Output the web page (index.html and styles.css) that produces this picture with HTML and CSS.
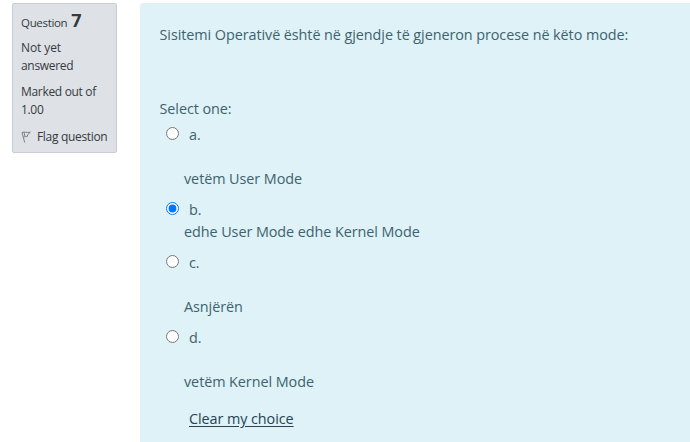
FILE: index.html
```html
<!DOCTYPE html>
<html lang="sq">
<head>
<meta charset="utf-8">
<title>Question 7</title>
<link rel="stylesheet" href="styles.css">
</head>
<body>
<main class="question">
  <aside class="info">
    <h3 class="number"><span>Question</span> <strong>7</strong></h3>
    <p class="state"><span class="wide">Not yet</span><br>answered</p>
    <p class="grade">Marked out of<br>1.00</p>
    <div class="flag">
      <svg class="flag-icon" width="10" height="12" viewBox="0 0 10 12" fill="none" stroke="#7b8085" stroke-width="1">
        <path d="M1 1.5 L3.7 11.5 M1 1.5 C3.5 .4 5.5 2 9.3 1.2 L6.8 3.5 L6.2 5.7 C4.8 5.2 3.8 5.9 2.3 6.2 M3 1.4 L4 5.5"/>
      </svg>
      <span>Flag question</span>
    </div>
  </aside>
  <section class="content">
    <p class="prompt">Sisitemi Operativë është në gjendje të gjeneron procese në këto mode:</p>
    <p class="select">Select one:</p>
    <div class="option spaced">
      <label class="choice"><input class="radio" type="radio" name="answer"><span>a.</span></label>
      <p class="answer">vetëm User Mode</p>
    </div>
    <div class="option">
      <label class="choice"><input class="radio" type="radio" name="answer" checked><span>b.</span></label>
      <p class="answer">edhe User Mode edhe Kernel Mode</p>
    </div>
    <div class="option spaced">
      <label class="choice"><input class="radio" type="radio" name="answer"><span>c.</span></label>
      <p class="answer">Asnjërën</p>
    </div>
    <div class="option spaced">
      <label class="choice"><input class="radio" type="radio" name="answer"><span>d.</span></label>
      <p class="answer">vetëm Kernel Mode</p>
    </div>
    <a class="clear" href="#">Clear my choice</a>
  </section>
</main>
</body>
</html>
```
FILE: styles.css
```css
* { box-sizing: border-box; }
body {
  margin: 0;
  overflow: hidden;
  background: #fff;
  font-family: "Open Sans", "Noto Sans", sans-serif;
}
p, h3 { margin: 0; }
.question {
  display: flex;
  align-items: flex-start;
  gap: 23px;
  height: 442px;
  padding: 3px 0 0 12px;
}
.info {
  flex: none;
  width: 105px;
  height: 150px;
  padding: 7px 0 0 8px;
  border: 1px solid #caced3;
  border-radius: 2px;
  background: #dee2e6;
  color: #343a40;
  font-size: 12px;
  letter-spacing: -0.32px;
  line-height: 18px;
  white-space: nowrap;
}
.number {
  display: flex;
  align-items: baseline;
  gap: 4px;
  height: 20px;
  margin-bottom: 8px;
  font-size: 11.5px;
  font-weight: 400;
  line-height: 24px;
}
.number strong { font-size: 18px; font-weight: 700; line-height: 16px; }
.wide { letter-spacing: -0.1px; }
.state, .grade { margin-bottom: 8px; }
.flag { display: flex; align-items: center; gap: 6px; padding-top: 1px; }
.content {
  flex: 1;
  height: 439px;
  padding: 21px 0 0 19.5px;
  border-radius: 4px 0 0 0;
  background: #def2f8;
  color: #3f626d;
  font-size: 14.4px;
  letter-spacing: -0.07px;
  line-height: 22px;
  white-space: nowrap;
}
.select { margin: 52px 0 4px; }
.option { margin-bottom: 9px; }
.choice { display: flex; gap: 10px; height: 22px; padding-left: 6.5px; }
.radio { width: 13px; height: 13px; margin: 3px 0 0; accent-color: #0075ff; }
.answer { padding-left: 24.5px; }
.spaced .answer { padding-top: 22px; }
.clear {
  display: block;
  width: 106px;
  margin: 15px 0 0 29.5px;
  color: #254353;
  text-underline-offset: 2px;
}
```
